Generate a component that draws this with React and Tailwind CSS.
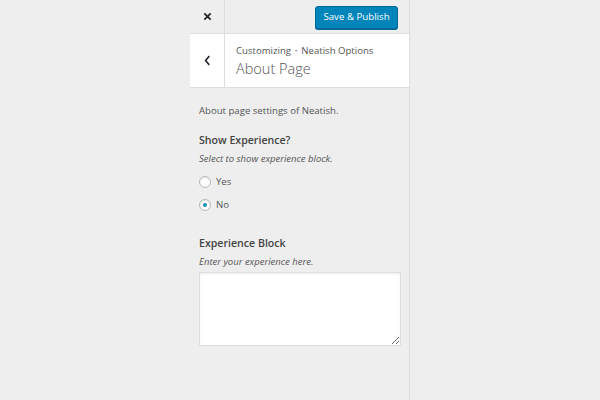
export default function App() {
  const font = { fontFamily: '"Open Sans", "Noto Sans", sans-serif' };
  return (
    <div className="w-[600px] h-[400px] bg-[#eeeeee] flex" style={font}>
      <div className="w-[190px]" />
      <div className="w-[220px] h-full border-r border-[#dddddd] flex flex-col">
        <div className="h-[34px] flex items-stretch border-b border-[#dddddd]">
          <div className="w-[35px] border-r border-[#dddddd] flex items-center justify-center">
            <svg width="9" height="9" viewBox="0 0 10 10">
              <path d="M1.5 1.5 L8.5 8.5 M8.5 1.5 L1.5 8.5" stroke="#23282d" strokeWidth="2" />
            </svg>
          </div>
          <div className="flex-1 flex items-center justify-end pr-[11px] pt-[1px]">
            <button className="h-[23px] w-[83px] rounded-[3px] bg-[#0085ba] border border-[#006799] text-white text-[9.7px] leading-none shadow-[0_1px_0_#006799]">
              Save &amp; Publish
            </button>
          </div>
        </div>
        <div className="h-[54px] bg-white flex items-stretch border-b border-[#dddddd]">
          <div className="w-[35px] border-r border-[#dddddd] flex items-center justify-center">
            <svg width="7" height="11" viewBox="0 0 8 12">
              <path d="M6 1 L1.8 6 L6 11" stroke="#23282d" strokeWidth="1.8" fill="none" />
            </svg>
          </div>
          <div className="flex-1 pl-[11px] pt-[9px]">
            <div className="text-[9.6px] leading-[16px] text-[#555555] flex items-center">
              <span>Customizing</span>
              <span className="mx-[4px] text-[6px]">•</span>
              <span>Neatish Options</span>
            </div>
            <div className="text-[14.5px] leading-[22px] text-[#555555] font-light mt-[-1px]">About Page</div>
          </div>
        </div>
        <div className="px-[9px] pt-[15px] text-[#555555]">
          <div className="text-[9.6px] leading-[16px]">About page settings of Neatish.</div>
          <div className="mt-[12px] text-[10.6px] font-semibold text-[#444444] leading-[18px]">Show Experience?</div>
          <div className="mt-[2px] text-[9.5px] italic leading-[16px]">Select to show experience block.</div>
          <div className="mt-[6px] flex items-center h-[18px]">
            <span className="w-[12px] h-[12px] rounded-full border border-[#b4b9be] bg-white shadow-[inset_0_1px_2px_rgba(0,0,0,0.1)] mr-[5px]" />
            <span className="text-[9.6px]">Yes</span>
          </div>
          <div className="mt-[5px] flex items-center h-[18px]">
            <span className="w-[12px] h-[12px] rounded-full border border-[#b4b9be] bg-white shadow-[inset_0_1px_2px_rgba(0,0,0,0.1)] mr-[5px] flex items-center justify-center">
              <span className="w-[4px] h-[4px] rounded-full bg-[#1e8cbe]" />
            </span>
            <span className="text-[9.6px]">No</span>
          </div>
          <div className="mt-[20px] text-[10.6px] font-semibold text-[#444444] leading-[18px]">Experience Block</div>
          <div className="mt-[2px] text-[9.5px] italic leading-[16px]">Enter your experience here.</div>
          <textarea className="mt-[2px] w-[202px] h-[74px] bg-white border border-[#dddddd] shadow-[inset_0_1px_2px_rgba(0,0,0,0.07)] block" />
        </div>
      </div>
    </div>
  );
}
